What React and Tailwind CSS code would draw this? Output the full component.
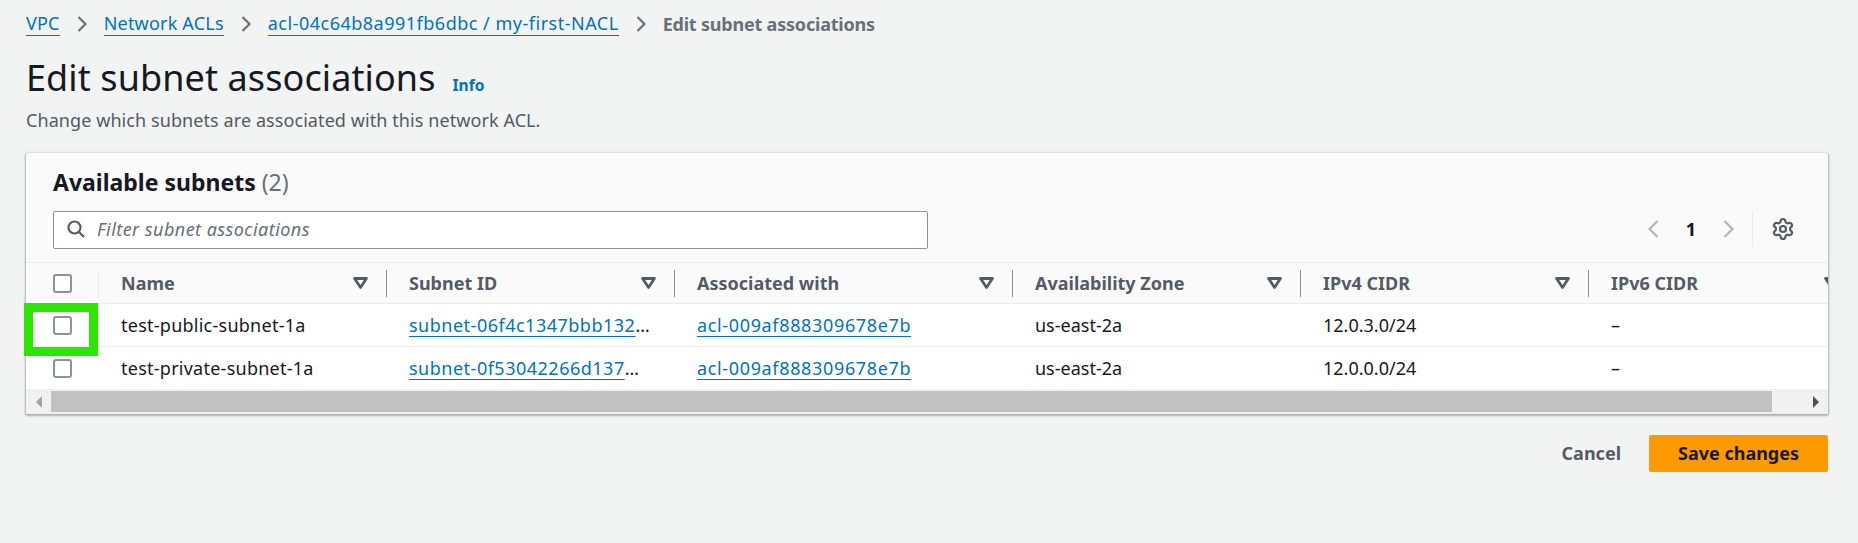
import React from "react";
import { Settings } from "lucide-react";

const Chevron = ({ dir = "right", className = "" }) => (
  <svg width="10" height="16" viewBox="0 0 10 16" fill="none" stroke="currentColor" strokeWidth="2.2" className={className}>
    <path d={dir === "right" ? "M1.5 1 L8.5 8 L1.5 15" : "M8.5 1 L1.5 8 L8.5 15"} />
  </svg>
);

const PageChevron = ({ dir = "right" }) => (
  <svg width="11" height="18" viewBox="0 0 11 18" fill="none" stroke="#aab7b8" strokeWidth="2.2">
    <path d={dir === "right" ? "M1.5 1 L9.5 9 L1.5 17" : "M9.5 1 L1.5 9 L9.5 17"} />
  </svg>
);

const Crumb = ({ children, className = "" }) => (
  <a className={`text-[#0073bb] border-b border-[#0073bb] leading-[23px] ${className}`}>{children}</a>
);

const Sep = () => <Chevron className="text-[#687078] mx-[17px]" />;

const Check = () => (
  <span className="block w-[19px] h-[19px] rounded-[3px] border-2 border-[#879596] bg-white box-border" />
);

const Caret = ({ className = "" }) => (
  <svg width="15" height="12" viewBox="0 0 15 12" fill="none" stroke="#545b64" strokeWidth="2.8" className={`shrink-0 ${className}`}>
    <path d="M1.6 1.5 H13.4 L7.5 10.4 Z" strokeLinejoin="round" />
  </svg>
);

const Row = ({ name, subnet, acl, cidr }) => (
  <div className="flex items-center h-[42px] bg-white text-[#16191f]">
    <div className="shrink-0 w-[72px] flex justify-end pr-[26px]"><Check /></div>
    <div className="shrink-0 w-[288px] pl-[23px] tracking-[0.25px]">{name}</div>
    <div className="shrink-0 w-[288px] pl-[23px] whitespace-nowrap">
      <a className="text-[#0073bb] underline underline-offset-[4px] tracking-[0.5px]">{subnet}</a>
      <span>…</span>
    </div>
    <div className="shrink-0 w-[338px] pl-[23px]"><a className="text-[#0073bb] underline underline-offset-[4px] tracking-[0.65px]">{acl}</a></div>
    <div className="shrink-0 w-[288px] pl-[23px]">us-east-2a</div>
    <div className="shrink-0 w-[288px] pl-[23px]">{cidr}</div>
    <div className="shrink-0 w-[240px] pl-[23px]">–</div>
  </div>
);

const columns = [
  ["Name", "w-[288px] border-[#eaeded]"],
  ["Subnet ID", "w-[288px] border-[#879596]"],
  ["Associated with", "w-[338px] border-[#879596]"],
  ["Availability Zone", "w-[288px] border-[#879596]"],
  ["IPv4 CIDR", "w-[288px] border-[#879596]"],
  ["IPv6 CIDR", "w-[269px] border-[#879596]"],
];

export default function App() {
  return (
    <div className="w-[1858px] h-[543px] overflow-hidden bg-[#f2f3f3] pl-[26px] pr-[30px] text-[18px] font-['Noto_Sans',sans-serif] text-[#16191f]">
      <nav className="flex items-center h-[24px] mt-[12px]">
        <Crumb className="tracking-[0.2px]">VPC</Crumb><Sep />
        <Crumb className="tracking-[0.2px]">Network ACLs</Crumb><Sep />
        <Crumb className="tracking-[0.5px]">acl-04c64b8a991fb6dbc / my-first-NACL</Crumb><Sep />
        <span className="font-bold text-[#687078] tracking-[-0.2px]">Edit subnet associations</span>
      </nav>

      <div className="flex items-baseline mt-[18px]">
        <h1 className="text-[36px] leading-[48px] tracking-[0.1px]">Edit subnet associations</h1>
        <a className="ml-[17px] text-[15.5px] font-bold text-[#0073bb]">Info</a>
      </div>
      <p className="mt-[7px] leading-[22px] text-[#545b64] tracking-[0.08px]">Change which subnets are associated with this network ACL.</p>

      <section className="relative mt-[22px] bg-[#fafafa] rounded-[2px] shadow-[0_1px_2px_1px_rgba(0,28,36,0.3)]">
        <div className="h-[109px] pl-[27px] pt-[15px] relative">
          <h2 className="text-[23px] font-bold leading-[28px]">Available subnets <span className="font-normal text-[#687078]">(2)</span></h2>
          <div className="mt-[15px] w-[875px] h-[38px] flex items-center bg-white border border-[#879596] rounded-[2px] pl-[12px] pb-[2px]">
            <svg width="20" height="20" viewBox="0 0 20 20" fill="none" stroke="#545b64" strokeWidth="2.2"><circle cx="8.5" cy="8.5" r="6" /><path d="M13 13 L18 18" /></svg>
            <span className="ml-[11px] italic text-[#687078] tracking-[0.45px]">Filter subnet associations</span>
          </div>
          <div className="absolute right-[33px] top-[58px] flex items-center h-[36px]">
            <PageChevron dir="left" />
            <span className="w-[64px] text-center font-bold">1</span>
            <PageChevron />
            <span className="w-px h-[36px] bg-[#eaeded] ml-[18px] mr-[18px]" />
            <Settings size={24} color="#545b64" strokeWidth={2.2} />
          </div>
        </div>

        <div className="overflow-hidden border-t border-[#eaeded]">
          <div className="flex items-center h-[41px] border-b border-[#eaeded]">
            <div className="shrink-0 w-[72px] h-[26px] flex justify-end items-center pr-[26px]"><Check /></div>
            {columns.map(([label, cls]) => (
              <div key={label} className={`shrink-0 h-[27px] flex items-center pl-[22px] pr-[18px] border-l ${cls}`}>
                <span className="font-bold text-[#545b64]">{label}</span>
                <Caret className="ml-auto" />
              </div>
            ))}
          </div>
          <Row name="test-public-subnet-1a" subnet="subnet-06f4c1347bbb132" acl="acl-009af888309678e7b" cidr="12.0.3.0/24" />
          <div className="h-px bg-[#eaeded]" />
          <Row name="test-private-subnet-1a" subnet="subnet-0f53042266d137" acl="acl-009af888309678e7b" cidr="12.0.0.0/24" />
        </div>

        <div className="flex items-center h-[25px] bg-[#f1f1f1] pt-[2px] pb-[2px]">
          <span className="w-[25px] flex justify-center"><span className="border-y-[6px] border-y-transparent border-r-[6px] border-r-[#a3a3a3]" /></span>
          <span className="w-[1721px] h-full bg-[#c1c1c1]" />
          <span className="flex-1 flex justify-end pr-[9px]"><span className="border-y-[6px] border-y-transparent border-l-[6px] border-l-[#505050]" /></span>
        </div>

        <div className="absolute left-[-2px] top-[150px] w-[74px] h-[53px] border-[9px] border-[#2ae600]" />
      </section>

      <div className="flex justify-end items-center mt-[21px]">
        <span className="font-bold text-[#545b64] mr-[28px]">Cancel</span>
        <span className="w-[179px] h-[37px] flex items-center justify-center bg-[#ff9900] rounded-[2px] font-bold text-[#16191f]">Save changes</span>
      </div>
    </div>
  );
}
